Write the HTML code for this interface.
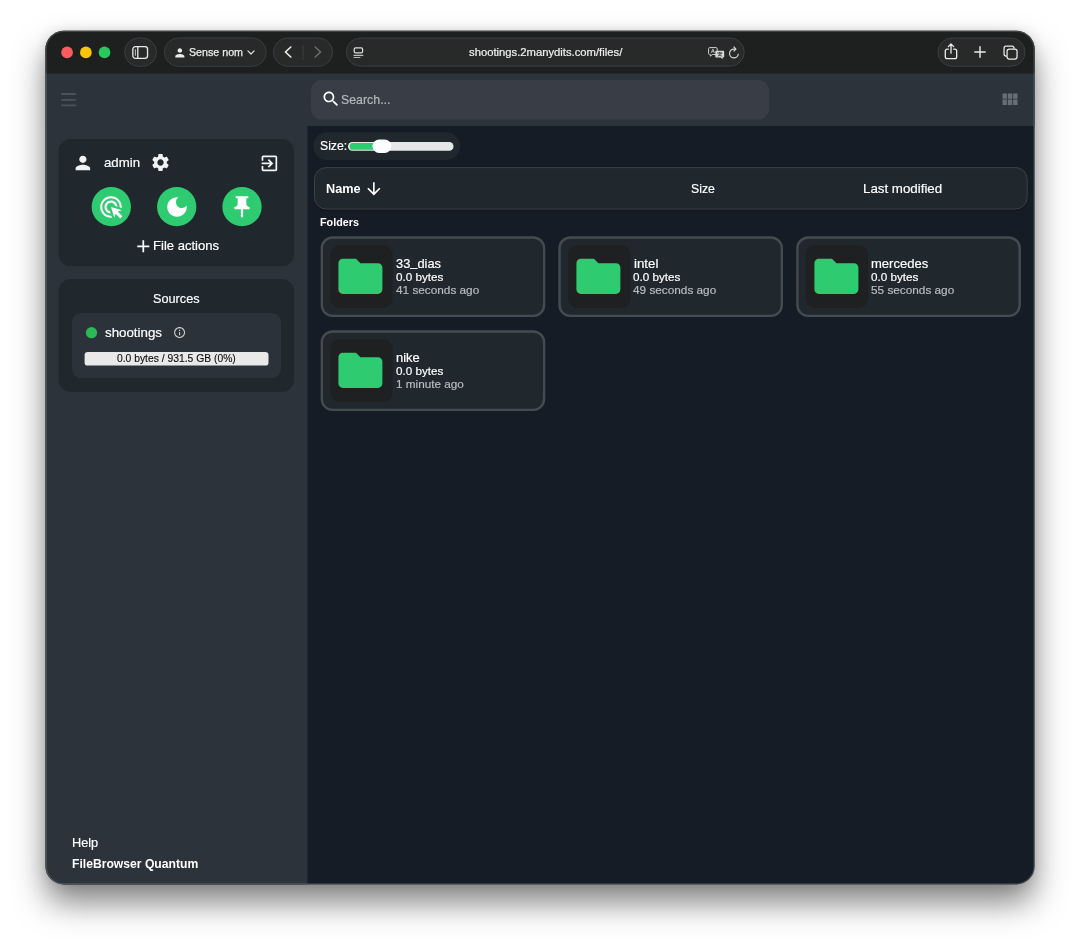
<!DOCTYPE html>
<html lang="en">
<head>
<meta charset="utf-8">
<title>FileBrowser Quantum</title>
<style>
*{box-sizing:border-box;margin:0;padding:0}
html,body{width:1080px;height:945px;background:#fff;overflow:hidden}
body{font-family:"Liberation Sans",sans-serif;color:#fff;position:relative}
.abs{position:absolute}
.t{position:absolute;white-space:nowrap;line-height:1;-webkit-text-stroke:.18px currentColor}
.b{font-weight:bold;-webkit-text-stroke:0}
svg{position:absolute;display:block;overflow:visible}
#shadow{position:absolute;left:46px;top:31px;width:988px;height:853px;border-radius:18px;
 box-shadow:0 18px 32px rgba(0,0,0,.5),0 0 12px rgba(0,0,0,.1)}
#win{position:absolute;left:46px;top:31px;width:988px;height:853px}
#pg{position:absolute;left:-46px;top:-31px;width:1080px;height:945px;will-change:transform}
.sec{color:#b9bcbf}
</style>
</head>
<body>
<div id="shadow"></div>
<div id="win"><div id="pg">
<svg style="left:0;top:0" width="1080" height="945" viewBox="0 0 1080 945"><defs><clipPath id="w"><rect x="45.4" y="30.8" width="989.3" height="853.7" rx="18.4"/></clipPath></defs><rect x="45.4" y="30.8" width="989.3" height="853.7" rx="18.4" fill="#161c25"/><g clip-path="url(#w)"><rect x="40.00" y="25.00" width="1000.00" height="48.40" rx="0.00" fill="#1e2020" /><rect x="40.00" y="73.40" width="1000.00" height="52.60" rx="0.00" fill="#2d333b" /><rect x="40.00" y="125.90" width="267.50" height="770.00" rx="0.00" fill="#2d333b" /></g><circle cx="67.10" cy="52.40" r="5.85" fill="#fe5b5f"/><circle cx="85.90" cy="52.40" r="5.85" fill="#fcc40b"/><circle cx="104.50" cy="52.40" r="5.85" fill="#2bc65c"/><rect x="124.65" y="37.95" width="31.80" height="28.40" rx="14.20" fill="#282929" stroke="#39414a" stroke-width="0.9" /><rect x="164.35" y="37.95" width="101.90" height="28.40" rx="14.20" fill="#282929" stroke="#39414a" stroke-width="0.9" /><rect x="273.45" y="38.05" width="59.10" height="28.20" rx="14.10" fill="#282929" stroke="#39414a" stroke-width="0.9" /><rect x="302.50" y="45.00" width="1.00" height="15.00" rx="0.00" fill="#3d3e3e" /><rect x="346.35" y="38.05" width="397.90" height="28.10" rx="14.05" fill="#282929" stroke="#39414a" stroke-width="0.9" /><rect x="937.95" y="38.05" width="87.10" height="28.20" rx="14.10" fill="#282929" stroke="#39414a" stroke-width="0.9" /><rect x="61.10" y="93.10" width="14.80" height="1.85" rx="0.50" fill="#4b5259" /><rect x="61.10" y="98.95" width="14.80" height="1.85" rx="0.50" fill="#4b5259" /><rect x="61.10" y="104.50" width="14.80" height="1.85" rx="0.50" fill="#4b5259" /><rect x="311.00" y="79.80" width="457.90" height="39.70" rx="10.50" fill="#393e46" /><rect x="58.60" y="138.90" width="235.40" height="127.40" rx="12.00" fill="#20282e" /><circle cx="111.30" cy="206.65" r="19.65" fill="#2fcb70"/><circle cx="176.70" cy="206.65" r="19.65" fill="#2fcb70"/><circle cx="242.00" cy="206.65" r="19.65" fill="#2fcb70"/><rect x="58.60" y="279.00" width="235.40" height="112.90" rx="12.00" fill="#20282e" /><rect x="72.00" y="312.90" width="209.00" height="65.10" rx="9.00" fill="#2b323a" /><circle cx="91.50" cy="332.65" r="5.65" fill="#2cb955"/><rect x="84.60" y="352.00" width="183.90" height="13.60" rx="3.20" fill="#e9e9e9" /><rect x="313.40" y="132.20" width="146.60" height="27.80" rx="13.90" fill="#20282e" /><rect x="348.00" y="142.00" width="105.50" height="8.80" rx="4.40" fill="#e6e8e8" /><path d="M353 143h23v6.800h-23a3.400 3.400 0 0 1 0-6.800z" fill="#2fcb70"/><rect x="372.50" y="139.60" width="18.80" height="13.30" rx="6.65" fill="#fff" /><rect x="314.00" y="168.00" width="713.70" height="42.40" rx="12.00" fill="rgba(0,0,0,.35)" /><rect x="314.50" y="167.60" width="712.70" height="41.50" rx="11.50" fill="#20282e" stroke="#3b4349" stroke-width="1" /><rect x="321.80" y="237.50" width="222.30" height="78.40" rx="10.80" fill="#20282e" stroke="#444c51" stroke-width="2.4" /><rect x="330.20" y="245.20" width="62.40" height="62.70" rx="9.50" fill="#1f2021" /><rect x="559.50" y="237.50" width="222.30" height="78.40" rx="10.80" fill="#20282e" stroke="#444c51" stroke-width="2.4" /><rect x="567.90" y="245.20" width="62.40" height="62.70" rx="9.50" fill="#1f2021" /><rect x="797.40" y="237.50" width="222.30" height="78.40" rx="10.80" fill="#20282e" stroke="#444c51" stroke-width="2.4" /><rect x="805.80" y="245.20" width="62.40" height="62.70" rx="9.50" fill="#1f2021" /><rect x="321.80" y="331.50" width="222.30" height="78.40" rx="10.80" fill="#20282e" stroke="#444c51" stroke-width="2.4" /><rect x="330.20" y="339.20" width="62.40" height="62.70" rx="9.50" fill="#1f2021" /><rect x="46.05" y="31.45" width="988" height="852.4" rx="17.75" fill="none" stroke="rgba(255,255,255,.17)" stroke-width="1.3"/></svg>
<svg style="left:132.1px;top:45.7px" width="16.4" height="13" viewBox="0 0 16 13" fill="none" stroke="#e9e9e9" stroke-width="1.3"><rect x=".65" y=".65" width="14.7" height="11.7" rx="2.6"/><path d="M5.6 .8v11.4"/><path d="M3.200 3.200v6.600" stroke-width="1" stroke="#bdbdbd"/></svg>
<svg style="left:173.30px;top:45.65px" width="13.7" height="13.7" viewBox="0 0 24 24" fill="#ececec" ><path d="M12 12c2.21 0 4-1.79 4-4s-1.79-4-4-4-4 1.79-4 4 1.79 4 4 4zm0 2c-2.67 0-8 1.34-8 4v2h16v-2c0-2.66-5.33-4-8-4z"/></svg>
<span class="t " style="left:189.10px;top:46.79px;font-size:11px;transform:scaleX(0.9704);transform-origin:0 0;color:#ececec;-webkit-text-stroke:.25px #ececec">Sense nom</span>
<svg style="left:247.1px;top:50.400px" width="8" height="5.300" viewBox="0 0 9 6" fill="none" stroke="#e0e0e0" stroke-width="1.4" stroke-linecap="round" stroke-linejoin="round"><path d="M1 1l3.5 3.5L8 1"/></svg>
<svg style="left:284px;top:46.3px" width="8" height="12" viewBox="0 0 8 12" fill="none" stroke="#f0f0f0" stroke-width="1.6" stroke-linecap="round" stroke-linejoin="round"><path d="M6.800 1L1.400 6l5.400 5"/></svg>
<svg style="left:314px;top:46.3px" width="8" height="12" viewBox="0 0 8 12" fill="none" stroke="#6d6e6e" stroke-width="1.5" stroke-linecap="round" stroke-linejoin="round"><path d="M1.200 1l5.400 5-5.400 5"/></svg>
<svg style="left:352.8px;top:46.500px" width="11" height="11" viewBox="0 0 11 11" fill="none" stroke="#dcdcdc" stroke-width="1.25" stroke-linecap="round"><rect x="1.2" y=".8" width="8.400" height="5.100" rx="1.400"/><path d="M1 8.300h8.800" stroke="#bdbdbd"/><path d="M1 10.500h6" stroke-width=".9" stroke="#c4c4c4"/></svg>
<span class="t " style="left:469.20px;top:47.13px;font-size:11.3px;transform:scaleX(0.9963);transform-origin:0 0;color:#f1f1f1;-webkit-text-stroke:.2px #f1f1f1">shootings.2manydits.com/files/</span>
<svg style="left:707.7px;top:46.600px" width="17" height="13" viewBox="0 0 17 13" fill="none"><path d="M1.6.6h6.6c.6 0 1 .4 1 1v4.900c0 .6-.4 1-1 1H4.300L2.400 9.200V7.500h-.8c-.6 0-1-.4-1-1V1.600c0-.6.4-1 1-1z" stroke="#cfcfcf" stroke-width="1"/><path d="M8.300 3.800h6.900c.6 0 1 .4 1 1v4.800c0 .6-.4 1-1 1h-.7v1.700l-1.900-1.700H8.300c-.6 0-1-.4-1-1V4.800c0-.6.4-1 1-1z" fill="#d6d6d6"/><path d="M3.300 5.800L4.900 2l1.600 3.800M3.800 4.700h2.200" stroke="#cfcfcf" stroke-width=".8"/><path d="M9.600 6h4.300M11.700 5.200V6M10.200 8.900c1.500-.5 2.600-1.500 3-2.900M10.600 6.900c.6 1 1.500 1.700 2.900 2.100" stroke="#262727" stroke-width=".8" stroke-linecap="round"/></svg>
<svg style="left:727.9px;top:46.100px" width="12" height="13" viewBox="0 0 12 13" fill="none" stroke="#d8d8d8" stroke-width="1.15" stroke-linecap="round" stroke-linejoin="round"><path d="M10.300 8.200a4.400 4.400 0 1 1-4.300-5.100h1.300"/><path d="M5.900 1L8 3.100 5.900 5.200"/></svg>
<svg style="left:944.3px;top:43px" width="14" height="17" viewBox="0 0 14 17" fill="none" stroke="#ececec" stroke-width="1.3" stroke-linecap="round" stroke-linejoin="round"><path d="M4.300 6.200H3.200c-1.100 0-1.900.8-1.900 1.900v5.600c0 1.100.8 1.900 1.900 1.900h7.600c1.100 0 1.900-.8 1.900-1.900V8.100c0-1.100-.8-1.900-1.900-1.900H9.700"/><path d="M7 10.200V1.200M4.300 3.600L7 .9l2.700 2.700"/></svg>
<svg style="left:974.3px;top:46.2px" width="12" height="12" viewBox="0 0 12 12" fill="none" stroke="#ececec" stroke-width="1.4" stroke-linecap="round"><path d="M6 .8v10.400M.8 6h10.400"/></svg>
<svg style="left:1002.7px;top:44.700px" width="15.2" height="15.2" viewBox="0 0 16 16" fill="none" stroke="#ececec" stroke-width="1.3"><path d="M4 11.600H3.300c-1.300 0-2.200-.9-2.200-2.200V3.300c0-1.300.9-2.200 2.200-2.200h6.100c1.300 0 2.200.9 2.200 2.200V4"/><rect x="4.300" y="4.300" width="10.500" height="10.500" rx="2.300"/></svg>
<svg style="left:320.60px;top:89.40px" width="20" height="20" viewBox="0 0 24 24" fill="#fff" ><path d="M15.5 14h-.79l-.28-.27C15.41 12.59 16 11.11 16 9.5 16 5.91 13.09 3 9.5 3S3 5.91 3 9.5 5.91 16 9.5 16c1.61 0 3.09-.59 4.23-1.57l.27.28v.79l5 4.99L20.49 19l-4.99-5zm-6 0C7.01 14 5 11.99 5 9.5S7.01 5 9.5 5 14 7.01 14 9.5 11.99 14 9.5 14z"/></svg>
<span class="t " style="left:340.70px;top:92.91px;font-size:13.1px;transform:scaleX(0.9442);transform-origin:0 0;color:#b6b9bc">Search...</span>
<svg style="left:998.90px;top:89.10px" width="21.2" height="21.2" viewBox="0 0 24 24" fill="#676e75" ><path d="M4 11h5V5H4v6zm0 7h5v-6H4v6zm6 0h5v-6h-5v6zm6 0h5v-6h-5v6zm-6-7h5V5h-5v6zm6-6v6h5V5h-5z"/></svg>
<svg style="left:71.97px;top:152.32px" width="21.75" height="21.75" viewBox="0 0 24 24" fill="#f2f2f2" ><path d="M12 12c2.21 0 4-1.79 4-4s-1.79-4-4-4-4 1.79-4 4 1.79 4 4 4zm0 2c-2.67 0-8 1.34-8 4v2h16v-2c0-2.66-5.33-4-8-4z"/></svg>
<span class="t " style="left:104.00px;top:155.61px;font-size:13.1px;transform:scaleX(1.0090);transform-origin:0 0;">admin</span>
<svg style="left:150.40px;top:152.35px" width="21" height="21" viewBox="0 0 24 24" fill="#f2f2f2" ><path d="M19.14 12.94c.04-.3.06-.61.06-.94 0-.32-.02-.64-.07-.94l2.03-1.58c.18-.14.23-.41.12-.61l-1.92-3.32c-.12-.22-.37-.29-.59-.22l-2.39.96c-.5-.38-1.03-.7-1.62-.94l-.36-2.54c-.04-.24-.24-.41-.48-.41h-3.84c-.24 0-.43.17-.47.41l-.36 2.54c-.59.24-1.13.57-1.62.94l-2.39-.96c-.22-.08-.47 0-.59.22L2.74 8.87c-.12.21-.08.47.12.61l2.03 1.58c-.05.3-.09.63-.09.94s.02.64.07.94l-2.03 1.58c-.18.14-.23.41-.12.61l1.92 3.32c.12.22.37.29.59.22l2.39-.96c.5.38 1.03.7 1.62.94l.36 2.54c.05.24.24.41.48.41h3.84c.24 0 .44-.17.47-.41l.36-2.54c.59-.24 1.13-.56 1.62-.94l2.39.96c.22.08.47 0 .59-.22l1.92-3.32c.12-.22.07-.47-.12-.61l-2.01-1.58zM12 15.6c-1.98 0-3.6-1.62-3.6-3.6s1.62-3.6 3.6-3.6 3.6 1.62 3.6 3.6-1.62 3.6-3.6 3.6z"/></svg>
<svg style="left:259.30px;top:152.60px" width="20.8" height="20.8" viewBox="0 0 24 24" fill="#f2f2f2" ><path d="M10.09 15.59L11.5 17l5-5-5-5-1.41 1.41L12.67 11H3v2h9.67l-2.58 2.59zM19 3H5c-1.11 0-2 .9-2 2v4h2V5h14v14H5v-4H3v4c0 1.1.89 2 2 2h14c1.1 0 2-.9 2-2V5c0-1.1-.9-2-2-2z"/></svg>
<svg style="left:98.30px;top:193.70px" width="26" height="26" viewBox="0 0 24 24" fill="#fff" ><path d="M11.71 17.99C8.53 17.84 6 15.22 6 12c0-3.31 2.69-6 6-6 3.22 0 5.84 2.53 5.99 5.71l-2.1-.63C15.48 9.31 13.89 8 12 8c-2.21 0-4 1.79-4 4 0 1.89 1.31 3.48 3.08 3.89l.63 2.1zM22 12c0 .3-.01.6-.04.9l-1.97-.59c.01-.1.01-.21.01-.31 0-4.42-3.58-8-8-8s-8 3.58-8 8 3.58 8 8 8c.1 0 .21 0 .31-.01l.59 1.97c-.3.03-.6.04-.9.04-5.52 0-10-4.48-10-10S6.48 2 12 2s10 4.48 10 10zm-3.77 4.26L22 15l-10-3 3 10 1.26-3.77 4.27 4.27 1.98-1.98-4.28-4.26z"/></svg>
<svg style="left:163.70px;top:193.70px" width="26" height="26" viewBox="0 0 24 24" fill="#fff" ><path d="M12 3c-4.97 0-9 4.03-9 9s4.03 9 9 9 9-4.03 9-9c0-.46-.04-.92-.1-1.36-.98 1.37-2.58 2.26-4.4 2.26-2.98 0-5.4-2.42-5.4-5.4 0-1.81.89-3.42 2.26-4.4-.44-.06-.9-.1-1.36-.1z"/></svg>
<svg style="left:229.00px;top:193.70px" width="26" height="26" viewBox="0 0 24 24" fill="#fff" ><path d="M16 9V4h1c.55 0 1-.45 1-1s-.45-1-1-1H7c-.55 0-1 .45-1 1s.45 1 1 1h1v5c0 1.66-1.34 3-3 3v2h5.97v7l1 1 1-1v-7H19v-2c-1.66 0-3-1.34-3-3z"/></svg>
<svg style="left:132.65px;top:235.60px" width="20.6" height="20.6" viewBox="0 0 24 24" fill="#fff" ><path d="M19 13h-6v6h-2v-6H5v-2h6V5h2v6h6v2z"/></svg>
<span class="t " style="left:153.00px;top:238.81px;font-size:13.1px;transform:scaleX(0.9977);transform-origin:0 0;">File actions</span>
<span class="t " style="left:153.00px;top:292.01px;font-size:13.1px;transform:scaleX(0.9697);transform-origin:0 0;">Sources</span>
<span class="t " style="left:104.70px;top:325.51px;font-size:13.1px;transform:scaleX(1.0164);transform-origin:0 0;">shootings</span>
<svg style="left:172.60px;top:326.25px" width="13.2" height="13.2" viewBox="0 0 24 24" fill="#c9cbcd" ><path d="M11 7h2v2h-2zm0 4h2v6h-2zm1-9C6.48 2 2 6.48 2 12s4.48 10 10 10 10-4.48 10-10S17.52 2 12 2zm0 18c-4.41 0-8-3.59-8-8s3.59-8 8-8 8 3.59 8 8-3.59 8-8 8z"/></svg>
<span class="t " style="left:116.70px;top:353.14px;font-size:10.7px;transform:scaleX(0.9658);transform-origin:0 0;color:#111;-webkit-text-stroke:.15px #111">0.0 bytes / 931.5 GB (0%)</span>
<span class="t " style="left:71.90px;top:835.81px;font-size:13.1px;transform:scaleX(0.9725);transform-origin:0 0;">Help</span>
<span class="t b" style="left:71.90px;top:856.71px;font-size:13.1px;transform:scaleX(0.9279);transform-origin:0 0;">FileBrowser Quantum</span>
<span class="t " style="left:320.20px;top:139.31px;font-size:13.1px;transform:scaleX(0.9340);transform-origin:0 0;">Size:</span>
<span class="t b" style="left:325.80px;top:181.61px;font-size:13.1px;transform:scaleX(0.9697);transform-origin:0 0;">Name</span>
<svg style="left:364.30px;top:178.65px" width="19.7" height="19.7" viewBox="0 0 24 24" fill="#fff" ><path d="M20 12l-1.41-1.41L13 16.17V4h-2v12.17l-5.58-5.59L4 12l8 8 8-8z"/></svg>
<span class="t " style="left:690.60px;top:181.61px;font-size:13.1px;transform:scaleX(0.9379);transform-origin:0 0;">Size</span>
<span class="t " style="left:863.00px;top:181.61px;font-size:13.1px;transform:scaleX(1.0165);transform-origin:0 0;">Last modified</span>
<span class="t b" style="left:319.70px;top:217.11px;font-size:11.8px;transform:scaleX(0.9127);transform-origin:0 0;">Folders</span>
<svg style="left:334.20px;top:250.20px" width="52.8" height="52.8" viewBox="0 0 24 24" fill="#2fcb70" ><path d="M10 4H4c-1.1 0-1.99.9-1.99 2L2 18c0 1.1.9 2 2 2h16c1.1 0 2-.9 2-2V8c0-1.1-.9-2-2-2h-8l-2-2z"/></svg>
<span class="t " style="left:395.80px;top:256.51px;font-size:13.1px;transform:scaleX(0.9806);transform-origin:0 0;">33<span style="position:relative;top:-1.6px">_</span>dias</span>
<span class="t " style="left:395.70px;top:271.67px;font-size:11.5px;transform:scaleX(1.0157);transform-origin:0 0;">0.0 bytes</span>
<span class="t sec" style="left:395.70px;top:284.87px;font-size:11.5px;transform:scaleX(1.0246);transform-origin:0 0;">41 seconds ago</span>
<svg style="left:571.90px;top:250.20px" width="52.8" height="52.8" viewBox="0 0 24 24" fill="#2fcb70" ><path d="M10 4H4c-1.1 0-1.99.9-1.99 2L2 18c0 1.1.9 2 2 2h16c1.1 0 2-.9 2-2V8c0-1.1-.9-2-2-2h-8l-2-2z"/></svg>
<span class="t " style="left:633.50px;top:256.51px;font-size:13.1px;transform:scaleX(1.0153);transform-origin:0 0;">intel</span>
<span class="t " style="left:633.40px;top:271.67px;font-size:11.5px;transform:scaleX(1.0157);transform-origin:0 0;">0.0 bytes</span>
<span class="t sec" style="left:633.40px;top:284.87px;font-size:11.5px;transform:scaleX(1.0246);transform-origin:0 0;">49 seconds ago</span>
<svg style="left:809.80px;top:250.20px" width="52.8" height="52.8" viewBox="0 0 24 24" fill="#2fcb70" ><path d="M10 4H4c-1.1 0-1.99.9-1.99 2L2 18c0 1.1.9 2 2 2h16c1.1 0 2-.9 2-2V8c0-1.1-.9-2-2-2h-8l-2-2z"/></svg>
<span class="t " style="left:871.40px;top:256.51px;font-size:13.1px;transform:scaleX(0.9945);transform-origin:0 0;">mercedes</span>
<span class="t " style="left:871.30px;top:271.67px;font-size:11.5px;transform:scaleX(1.0157);transform-origin:0 0;">0.0 bytes</span>
<span class="t sec" style="left:871.30px;top:284.87px;font-size:11.5px;transform:scaleX(1.0246);transform-origin:0 0;">55 seconds ago</span>
<svg style="left:334.20px;top:344.20px" width="52.8" height="52.8" viewBox="0 0 24 24" fill="#2fcb70" ><path d="M10 4H4c-1.1 0-1.99.9-1.99 2L2 18c0 1.1.9 2 2 2h16c1.1 0 2-.9 2-2V8c0-1.1-.9-2-2-2h-8l-2-2z"/></svg>
<span class="t " style="left:395.80px;top:350.51px;font-size:13.1px;transform:scaleX(0.9862);transform-origin:0 0;">nike</span>
<span class="t " style="left:395.70px;top:365.67px;font-size:11.5px;transform:scaleX(1.0157);transform-origin:0 0;">0.0 bytes</span>
<span class="t sec" style="left:395.70px;top:378.87px;font-size:11.5px;transform:scaleX(1.0197);transform-origin:0 0;">1 minute ago</span>
</div></div>
</body>
</html>
